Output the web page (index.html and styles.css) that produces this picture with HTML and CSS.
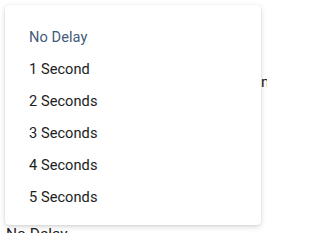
FILE: index.html
```html
<!DOCTYPE html>
<html>
<head>
<meta charset="utf-8">
<link rel="stylesheet" href="styles.css">
</head>
<body>
<div class="page">
  <div class="bg-line bg-right">m</div>
  <div class="bg-line bg-bottom">No Delay</div>
  <ul class="menu">
    <li class="item selected">No Delay</li>
    <li class="item">1 Second</li>
    <li class="item">2 Seconds</li>
    <li class="item">3 Seconds</li>
    <li class="item">4 Seconds</li>
    <li class="item">5 Seconds</li>
  </ul>
</div>
</body>
</html>
```
FILE: styles.css
```css
html, body {
  margin: 0;
  padding: 0;
  background: #ffffff;
}
body {
  width: 267px;
  height: 233px;
  overflow: hidden;
  font-family: Roboto, "Liberation Sans", sans-serif;
}
.page {
  position: relative;
  width: 267px;
  height: 233px;
  overflow: hidden;
}
.bg-line {
  font-size: 15.5px;
  color: #222222;
  white-space: nowrap;
  line-height: 18px;
}
.bg-right {
  padding-top: 73px;
  padding-left: 261px;
}
.bg-bottom {
  padding-top: 134px;
  padding-left: 6px;
}
.menu {
  position: absolute;
  left: 5px;
  top: 5px;
  width: 256px;
  margin: 0;
  padding: 16px 0 12px;
  list-style: none;
  background: #ffffff;
  border-radius: 4px;
  box-shadow: 0 2px 6px rgba(0,0,0,0.12), 0 1px 3px rgba(0,0,0,0.08), 0 0 1px rgba(0,0,0,0.08);
  box-sizing: border-box;
}
.item {
  height: 32px;
  line-height: 32px;
  padding-left: 24px;
  font-size: 14.6px;
  letter-spacing: 0.05px;
  color: #212121;
}
.item.selected {
  color: #435a7a;
}
```
